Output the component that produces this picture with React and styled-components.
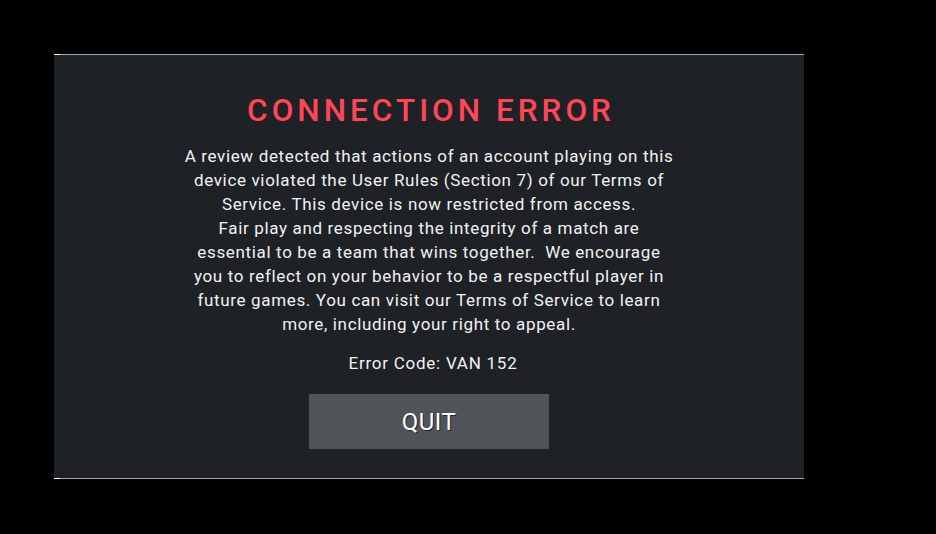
import React from "react";
import styled, { createGlobalStyle } from "styled-components";

const Global = createGlobalStyle`
  html, body { margin: 0; padding: 0; background: #000; }
  body { font-family: "Roboto", "Liberation Sans", sans-serif; }
`;

const Page = styled.div`
  width: 936px;
  height: 534px;
  padding: 54px 0 0 54px;
  box-sizing: border-box;
  background: #000;
`;

const Rule = styled.div`
  width: 750px;
  height: 1px;
  background: linear-gradient(to right, #ffffff 6px, #a4a6a8 6px);
`;

const Panel = styled.div`
  width: 750px;
  height: 423px;
  background: #1e2125;
  display: flex;
  flex-direction: column;
  align-items: center;
  box-sizing: border-box;
  padding-top: 36px;
`;

const Title = styled.h1`
  margin: 0;
  color: #ff4655;
  font-family: "Roboto", "Liberation Sans", sans-serif;
  font-weight: 500;
  font-size: 31.5px;
  letter-spacing: 4px;
  line-height: 40px;
  padding-left: 4px;
`;

const Body = styled.p`
  margin: 13px 0 0;
  color: #f2f2f2;
  font-size: 17px;
  line-height: 24px;
  text-align: center;
  white-space: pre;
  letter-spacing: 0.65px;
`;

const Code = styled.div`
  margin-top: 15px;
  padding-left: 8px;
  color: #f2f2f2;
  font-size: 17px;
  line-height: 24px;
  letter-spacing: 0.75px;
`;

const QuitButton = styled.button`
  margin-top: 19px;
  width: 240px;
  height: 55px;
  border: none;
  background: #505458;
  color: #ffffff;
  font-family: "Roboto", "Liberation Sans", sans-serif;
  font-size: 24px;
  letter-spacing: 0.5px;
  text-shadow: 1px 1px 0 rgba(0, 0, 0, 0.6);
  cursor: pointer;
`;

const lines = [
  "A review detected that actions of an account playing on this",
  "device violated the User Rules (Section 7) of our Terms of",
  "Service. This device is now restricted from access.",
  "Fair play and respecting the integrity of a match are",
  "essential to be a team that wins together.  We encourage",
  "you to reflect on your behavior to be a respectful player in",
  "future games. You can visit our Terms of Service to learn",
  "more, including your right to appeal.",
];

export default function App() {
  return (
    <>
      <Global />
      <Page>
        <Rule />
        <Panel>
          <Title>CONNECTION ERROR</Title>
          <Body>{lines.join("\n")}</Body>
          <Code>Error Code: VAN 152</Code>
          <QuitButton>QUIT</QuitButton>
        </Panel>
        <Rule />
      </Page>
    </>
  );
}
